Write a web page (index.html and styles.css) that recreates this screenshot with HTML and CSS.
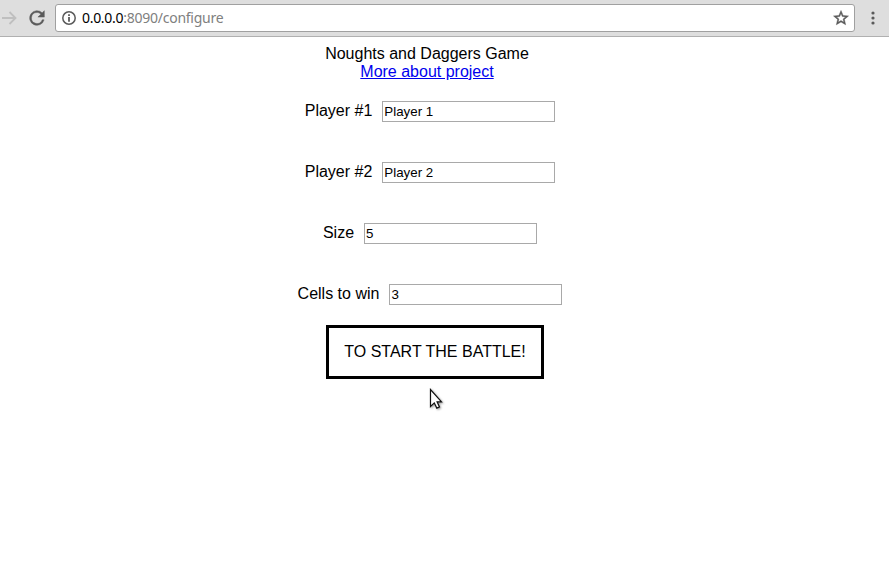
FILE: index.html
```html
<!DOCTYPE html>
<html lang="en">
<head>
<meta charset="utf-8">
<title>Noughts and Daggers Game</title>
<link rel="stylesheet" href="styles.css">
</head>
<body>
<header class="toolbar">
  <svg class="forward" width="16" height="16" viewBox="0 0 16 16"><path d="M0 8H13M7.5 2l6 6-6 6" fill="none" stroke="#bfbfbf" stroke-width="1.8"/></svg>
  <svg class="reload" width="24" height="24" viewBox="0 0 24 24"><path fill="#5a5a5a" stroke="#5a5a5a" stroke-width=".5" d="M17.65 6.35A8 8 0 1 0 19.73 14h-2.08A6 6 0 1 1 12 6c1.66 0 3.14.69 4.22 1.78L13 11h7V4z"/></svg>
  <div class="address">
    <svg class="info" width="14" height="14" viewBox="0 0 14 14"><circle cx="7" cy="7" r="6.2" fill="none" stroke="#5a5a5a" stroke-width="1.5"/><path d="M6.1 3.2h1.8v1.7H6.1zM6.1 6h1.8v4.7H6.1z" fill="#5a5a5a"/></svg>
    <div class="url"><span class="host">0.0.0.0</span><span class="path">:8090/configure</span></div>
    <svg class="star" width="18" height="18" viewBox="0 0 24 24"><path fill="#5a5a5a" stroke="#5a5a5a" stroke-width=".6" d="M22 9.24l-7.19-.62L12 2 9.19 8.63 2 9.24l5.46 4.73L5.82 21 12 17.27 18.18 21l-1.63-7.03L22 9.24zM12 15.4l-3.76 2.27 1-4.28-3.32-2.88 4.38-.38L12 6.1l1.71 4.04 4.38.38-3.32 2.88 1 4.28L12 15.4z"/></svg>
  </div>
  <svg class="menu" width="4" height="14" viewBox="0 0 4 14"><g fill="#5a5a5a"><circle cx="2" cy="2" r="1.6"/><circle cx="2" cy="7" r="1.6"/><circle cx="2" cy="12" r="1.6"/></g></svg>
</header>
<main class="page">
  <div class="title">Noughts and Daggers Game</div>
  <a class="about" href="#">More about project</a>
  <form class="form">
    <label class="field"><span class="caption">Player #1</span><input type="text" value="Player 1"></label>
    <label class="field"><span class="caption">Player #2</span><input type="text" value="Player 2"></label>
    <label class="field"><span class="caption">Size</span><input type="text" value="5"></label>
    <label class="field"><span class="caption">Cells to win</span><input type="text" value="3"></label>
    <button class="start" type="button">TO START THE BATTLE!</button>
  </form>
</main>
<svg class="cursor" width="16" height="23" viewBox="0 0 16 23"><path d="M1.5 1.5v17l3.8-3.6 2.5 5.2 2.7-1.2-2.4-5.1h4.4z" fill="#fff" stroke="#111" stroke-width="1.2"/></svg>
</body>
</html>
```
FILE: styles.css
```css
* { box-sizing: border-box; }
body {
  margin: 0;
  height: 576px;
  overflow: hidden;
  background: #fff;
  color: #000;
  font: 16px/18px "Liberation Sans", Arial, sans-serif;
}
.toolbar {
  display: flex;
  align-items: center;
  height: 37px;
  padding-right: 14px;
  background: #dedede;
  border-bottom: 1px solid #b0b0b0;
}
.forward { margin-left: 2px; }
.reload { width: 22px; height: 22px; margin: 0 7px 0 8px; }
.address {
  display: flex;
  align-items: center;
  flex: 1;
  height: 28px;
  padding: 0 4px 0 6px;
  background: #fff;
  border: 1px solid #a0a0a0;
  border-radius: 3px;
}
.url {
  flex: 1;
  margin-left: 6px;
  font: 14px/20px "Noto Sans", sans-serif;
  letter-spacing: -0.25px;
}
.host { letter-spacing: -0.3px; }
.path { color: #808080; }
.menu { margin-left: 16px; }
.page {
  display: flex;
  flex-direction: column;
  align-items: center;
  width: 854px;
  padding-top: 8px;
}
.about { color: #00e; }
.form {
  display: flex;
  flex-direction: column;
  align-items: center;
  padding: 20px 0 0 6px;
}
.field {
  display: flex;
  align-items: center;
  gap: 10px;
  height: 21px;
  margin-bottom: 40px;
}
.field:nth-child(4) { margin-bottom: 20px; }
.caption { padding-bottom: 2px; }
.field input {
  width: 173px;
  height: 21px;
  margin: 0;
  padding: 1px;
  border: 1px solid #a9a9a9;
  font: 13.333px "Liberation Sans", Arial, sans-serif;
}
.start {
  width: 218px;
  height: 54px;
  margin-left: 10px;
  padding: 0;
  background: #fff;
  border: 3px solid #000;
  color: #000;
  font: inherit;
}
.cursor { position: absolute; left: 429px; top: 388px; filter: drop-shadow(1px 1px 1px #0006); }
```
